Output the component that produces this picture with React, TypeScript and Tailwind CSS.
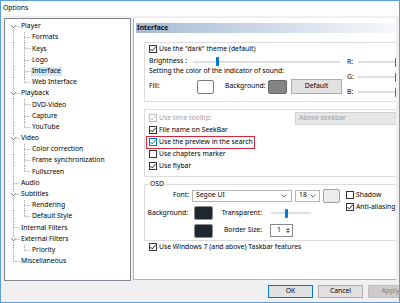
import React from "react";

type Node = { label: string; children?: string[] };

const tree: Node[] = [
  { label: "Player", children: ["Formats", "Keys", "Logo", "Interface", "Web Interface"] },
  { label: "Playback", children: ["DVD-Video", "Capture", "YouTube"] },
  { label: "Video", children: ["Color correction", "Frame synchronization", "Fullscreen"] },
  { label: "Audio" },
  { label: "Subtitles", children: ["Rendering", "Default Style"] },
  { label: "Internal Filters" },
  { label: "External Filters", children: ["Priority"] },
  { label: "Miscellaneous" },
];

type Row = { label: string; depth: 0 | 1; first?: boolean; last?: boolean; parent?: boolean; lastChild?: boolean };

const rows: Row[] = [];
tree.forEach((n, i) => {
  rows.push({ label: n.label, depth: 0, first: i === 0, last: i === tree.length - 1, parent: !!n.children });
  n.children?.forEach((c, j) => rows.push({ label: c, depth: 1, lastChild: j === n.children!.length - 1 }));
});

const H = 11.2;
const dot = { stroke: "#a0a0a0", strokeWidth: 1, strokeDasharray: "1 1" };

const TreeLines = ({ row }: { row: Row }) => {
  const mid = H / 2;
  if (row.depth === 0) {
    return (
      <svg width="15" height={H} className="shrink-0">
        {row.parent ? (
          <>
            {!row.first && <line x1="8.5" y1="0" x2="8.5" y2="3" {...dot} />}
            <line x1="8.5" y1="8" x2="8.5" y2={H} {...dot} />
            <line x1="11.5" y1={mid} x2="15" y2={mid} {...dot} />
            <polyline points="6,4.3 8.5,6.8 11,4.3" fill="none" stroke="#606060" strokeWidth="1" />
          </>
        ) : (
          <>
            <line x1="8.5" y1="0" x2="8.5" y2={row.last ? mid : H} {...dot} />
            <line x1="8.5" y1={mid} x2="15" y2={mid} {...dot} />
          </>
        )}
      </svg>
    );
  }
  return (
    <svg width="26" height={H} className="shrink-0">
      <line x1="8.5" y1="0" x2="8.5" y2={H} {...dot} />
      <line x1="19.5" y1="0" x2="19.5" y2={row.lastChild ? mid : H} {...dot} />
      <line x1="19.5" y1={mid} x2="26" y2={mid} {...dot} />
    </svg>
  );
};

const Check = ({ checked, state = "normal" }: { checked?: boolean; state?: "normal" | "hover" | "disabled" }) => {
  const border = state === "hover" ? "border-[#0078d7]" : state === "disabled" ? "border-[#c0c0c0]" : "border-[#333333]";
  const stroke = state === "hover" ? "#0078d7" : state === "disabled" ? "#c0c0c0" : "#222222";
  return (
    <span className={`w-[8px] h-[8px] border ${border} bg-white flex items-center justify-center shrink-0`}>
      {checked && (
        <svg width="6" height="6" viewBox="0 0 6 6">
          <path d="M0.4 3 L2.2 4.9 L5.6 0.9" fill="none" stroke={stroke} strokeWidth="1" />
        </svg>
      )}
    </span>
  );
};

const CheckRow = ({ label, checked, state }: { label: string; checked?: boolean; state?: "normal" | "hover" | "disabled" }) => (
  <div className="flex items-center h-[12px] gap-[2px]">
    <Check checked={checked} state={state} />
    <span className={state === "disabled" ? "text-[#a0a0a0]" : ""}>{label}</span>
  </div>
);

const Slider = ({ width, at }: { width: number; at: number }) => (
  <div className="relative h-[9px] flex items-center shrink-0" style={{ width }}>
    <div className="w-full h-[2px] bg-[#dedede]" />
    <div className="absolute top-0 w-[3px] h-[9px] bg-[#0078d7] rounded-[1px]" style={{ left: at }} />
  </div>
);

const Chevron = ({ color = "#606060" }: { color?: string }) => (
  <svg width="6" height="4" viewBox="0 0 6 4" className="shrink-0">
    <polyline points="0.5,0.5 3,3 5.5,0.5" fill="none" stroke={color} strokeWidth="0.9" />
  </svg>
);

const Swatch = ({ className }: { className: string }) => <div className={`shrink-0 rounded-[2px] border ${className}`} />;

export default function App() {
  return (
    <div className="w-[400px] h-[303px] border border-[#5c9fdc] bg-[#f0f0f0] flex flex-col overflow-hidden text-[6.8px] text-black font-['Noto_Sans','Liberation_Sans',sans-serif] leading-none">
      <div className="h-[15px] bg-white flex items-center pl-[2px] shrink-0">Options</div>

      <div className="h-[267px] flex gap-[2px] pt-[2px] px-[3px] shrink-0">
        {/* tree */}
        <div className="w-[127px] h-[263px] shrink-0 bg-white border border-[#828790] pt-[2px]">
          {rows.map((r) => (
            <div key={r.label} className="flex items-center" style={{ height: H }}>
              <TreeLines row={r} />
              <span className={`px-[1px] h-[9px] flex items-center ${r.label === "Interface" ? "bg-[#cce8ff]" : ""}`}>{r.label}</span>
            </div>
          ))}
        </div>

        {/* page */}
        <div className="flex-1 h-[262px] bg-white border-l border-b border-[#b4b4b4] overflow-hidden">
          <div className="ml-[2px] mt-[5px] h-[10px] bg-linear-to-r from-[#a6bad4] to-[#f7f9fc] flex items-center pl-[1px] font-bold text-[#111]">
            Interface
          </div>

          {/* group 1 */}
          <div className="ml-[10px] mt-[9px] w-[280px] h-[60px] border border-[#dcdcdc] flex">
            <div className="w-[202px] pl-[4px] flex flex-col shrink-0">
              <CheckRow label={'Use the "dark" theme (default)'} checked />
              <div className="flex items-center h-[11px] mt-[1px]">
                <span className="w-[44px] shrink-0">Brightness :</span>
                <Slider width={147} at={23} />
              </div>
              <div className="flex items-center h-[8px]">Setting the color of the indicator of sound:</div>
              <div className="flex items-center h-[15px] mt-[4px]">
                <span className="w-[48px] shrink-0">Fill:</span>
                <Swatch className="w-[17px] h-[14px] bg-white border-[#7a7a7a]" />
                <span className="w-[43px] ml-[11px] shrink-0">Background:</span>
                <Swatch className="w-[19px] h-[14px] bg-[#858585] border-[#666]" />
                <div className="ml-[4px] w-[51px] h-[15px] bg-[#e1e1e1] border border-[#adadad] flex items-center justify-center shrink-0">Default</div>
              </div>
            </div>
            <div className="flex flex-col pt-[11.5px]">
              {["R:", "G:", "B:"].map((c) => (
                <div key={c} className="flex items-center h-[15px]">
                  <span className="w-[11px] shrink-0">{c}</span>
                  <Slider width={60} at={37} />
                </div>
              ))}
            </div>
          </div>

          {/* group 2 */}
          <div className="ml-[10px] mt-[7px] w-[280px] h-[68px] border border-[#dcdcdc] pl-[4px] pt-[2px]">
            <div className="flex items-center h-[12px]">
              <div className="w-[146px] shrink-0">
                <CheckRow label="Use time tooltip:" checked state="disabled" />
              </div>
              <div className="w-[110px] h-[13px] bg-[#e6e6e6] border border-[#d0d0d0] flex items-center justify-between pl-[3px] pr-[4px] text-[#a0a0a0] shrink-0">
                Above seekbar
                <Chevron color="#b0b0b0" />
              </div>
            </div>
            <CheckRow label="File name on SeekBar" checked />
            <div className="h-[12px] flex items-center">
              <div className="inline-flex items-center h-[13px] gap-[2px] -ml-[3px] pl-[2px] pr-[1px] border border-[#d9253a]">
                <Check checked state="hover" />
                <span>Use the preview in the search</span>
              </div>
            </div>
            <CheckRow label="Use chapters marker" />
            <CheckRow label="Use flybar" checked />
          </div>

          {/* OSD */}
          <div className="relative ml-[10px] mt-[7px] w-[280px] h-[57px] border border-[#dcdcdc] flex pt-[3px]">
            <span className="absolute -top-[4px] left-[4px] bg-white px-[1px]">OSD</span>
            <div className="flex flex-col w-[195px] shrink-0">
              <div className="flex items-center h-[15px]">
                <span className="w-[45px] pr-[1px] text-right shrink-0">Font:</span>
                <div className="ml-[2px] w-[100px] h-[12px] bg-white border border-[#b5b5b5] flex items-center justify-between pl-[3px] pr-[4px] shrink-0">
                  Segoe UI
                  <Chevron />
                </div>
                <div className="ml-[3px] w-[25px] h-[12px] bg-white border border-[#b5b5b5] flex items-center justify-between pl-[3px] pr-[3px] shrink-0">
                  18
                  <Chevron />
                </div>
                <Swatch className="ml-[3px] w-[17px] h-[14px] bg-[#ececec] border-[#a0a0a0]" />
              </div>
              <div className="flex items-center h-[16px] mt-[2px]">
                <span className="w-[45px] pr-[2px] text-right shrink-0">Background:</span>
                <Swatch className="ml-[4px] w-[19px] h-[14px] bg-[#1f2831] border-[#8a8a8a]" />
                <span className="w-[50px] pr-[1px] text-right shrink-0">Transparent:</span>
                <div className="ml-[8px]">
                  <Slider width={40} at={14} />
                </div>
              </div>
              <div className="flex items-center h-[15px] mt-[2px]">
                <span className="w-[45px] shrink-0" />
                <Swatch className="ml-[4px] w-[19px] h-[14px] bg-[#1f2831] border-[#8a8a8a]" />
                <span className="w-[50px] pr-[1px] text-right shrink-0">Border Size:</span>
                <div className="ml-[7px] w-[23px] h-[13px] bg-white border border-[#8a8a8a] flex items-center justify-between pl-[6px] pr-[1px] shrink-0">
                  1
                  <div className="flex flex-col gap-[1px] items-center w-[6px]">
                    <span className="w-0 h-0 border-x-[2px] border-x-transparent border-b-[2px] border-b-[#505050]" />
                    <span className="w-0 h-0 border-x-[2px] border-x-transparent border-t-[2px] border-t-[#505050]" />
                  </div>
                </div>
              </div>
            </div>
            <div className="ml-[6px] pt-[1px] flex flex-col">
              <CheckRow label="Shadow" />
              <CheckRow label="Anti-aliasing" checked />
            </div>
          </div>

          <div className="ml-[15px]">
            <CheckRow label="Use Windows 7 (and above) Taskbar features" checked />
          </div>
        </div>
      </div>

      <div className="flex gap-[5px] pl-[267px] pt-[2px] overflow-hidden">
        <div className="w-[45px] h-[13px] shrink-0 bg-[#e1e1e1] border border-[#0078d7] flex items-center justify-center">OK</div>
        <div className="w-[45px] h-[13px] shrink-0 bg-[#e1e1e1] border border-[#adadad] flex items-center justify-center">Cancel</div>
        <div className="w-[45px] h-[13px] shrink-0 bg-[#cccccc] border border-[#bfbfbf] flex items-center justify-center text-[#838383]">Apply</div>
      </div>
    </div>
  );
}
